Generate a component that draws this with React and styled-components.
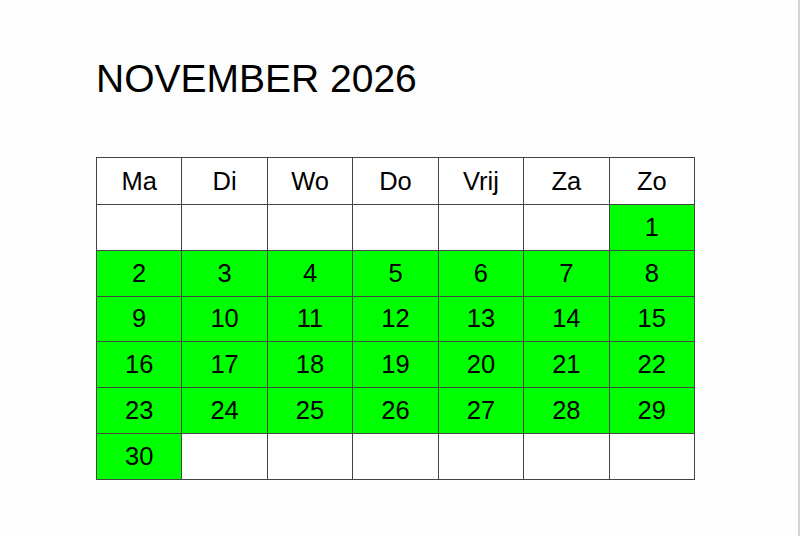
import React from 'react';
import styled, { createGlobalStyle } from 'styled-components';

const days = ['Ma', 'Di', 'Wo', 'Do', 'Vrij', 'Za', 'Zo'];

// november 2026 starts on a sunday
const buildWeeks = () => {
    const cells = [...Array(6).fill(null)];
    for (let d = 1; d <= 30; d++) cells.push(d);
    while (cells.length % 7) cells.push(null);
    const weeks = [];
    for (let i = 0; i < cells.length; i += 7) weeks.push(cells.slice(i, i + 7));
    return weeks;
};

const App = () => {
    const weeks = buildWeeks();
    return (
        <>
            <GlobalStyle />
            <Page>
                <Title>NOVEMBER 2026</Title>
                <Calendar>
                    <thead>
                        <HeadRow>
                            {days.map((day) => (
                                <HeadCell key={day}>{day}</HeadCell>
                            ))}
                        </HeadRow>
                    </thead>
                    <tbody>
                        {weeks.map((week, i) => (
                            <WeekRow key={i}>
                                {week.map((day, j) => (
                                    <DayCell key={j} $active={day !== null}>
                                        {day}
                                    </DayCell>
                                ))}
                            </WeekRow>
                        ))}
                    </tbody>
                </Calendar>
            </Page>
        </>
    );
};

const GlobalStyle = createGlobalStyle`
    html, body {
        margin: 0;
        padding: 0;
        background: #fff;
    }
    body {
        font-family: 'Liberation Sans', Arial, sans-serif;
        color: #000;
    }
`;

const Page = styled.div`
    box-sizing: border-box;
    width: 800px;
    height: 536px;
    padding: 59px 0 0 96px;
    background: #fdfdfd;
    border-right: 2px solid #d4d4d4;
`;

const Title = styled.h1`
    margin: 0 0 59px 0;
    font-size: 39px;
    line-height: 1;
    font-weight: normal;
    letter-spacing: 0;
`;

const Calendar = styled.table`
    border-collapse: collapse;
    table-layout: fixed;
    width: 599px;
    font-size: 25.5px;
`;

const HeadRow = styled.tr`
    height: 47px;
`;

const WeekRow = styled.tr`
    height: 45.8px;
`;

const HeadCell = styled.th`
    border: 1px solid #444;
    padding: 0;
    font-weight: normal;
    text-align: center;
    background: #fff;
`;

const DayCell = styled.td`
    border: 1px solid #444;
    padding: 0;
    text-align: center;
    background: ${(props) => (props.$active ? '#00ff00' : '#fff')};
`;

export default App;
